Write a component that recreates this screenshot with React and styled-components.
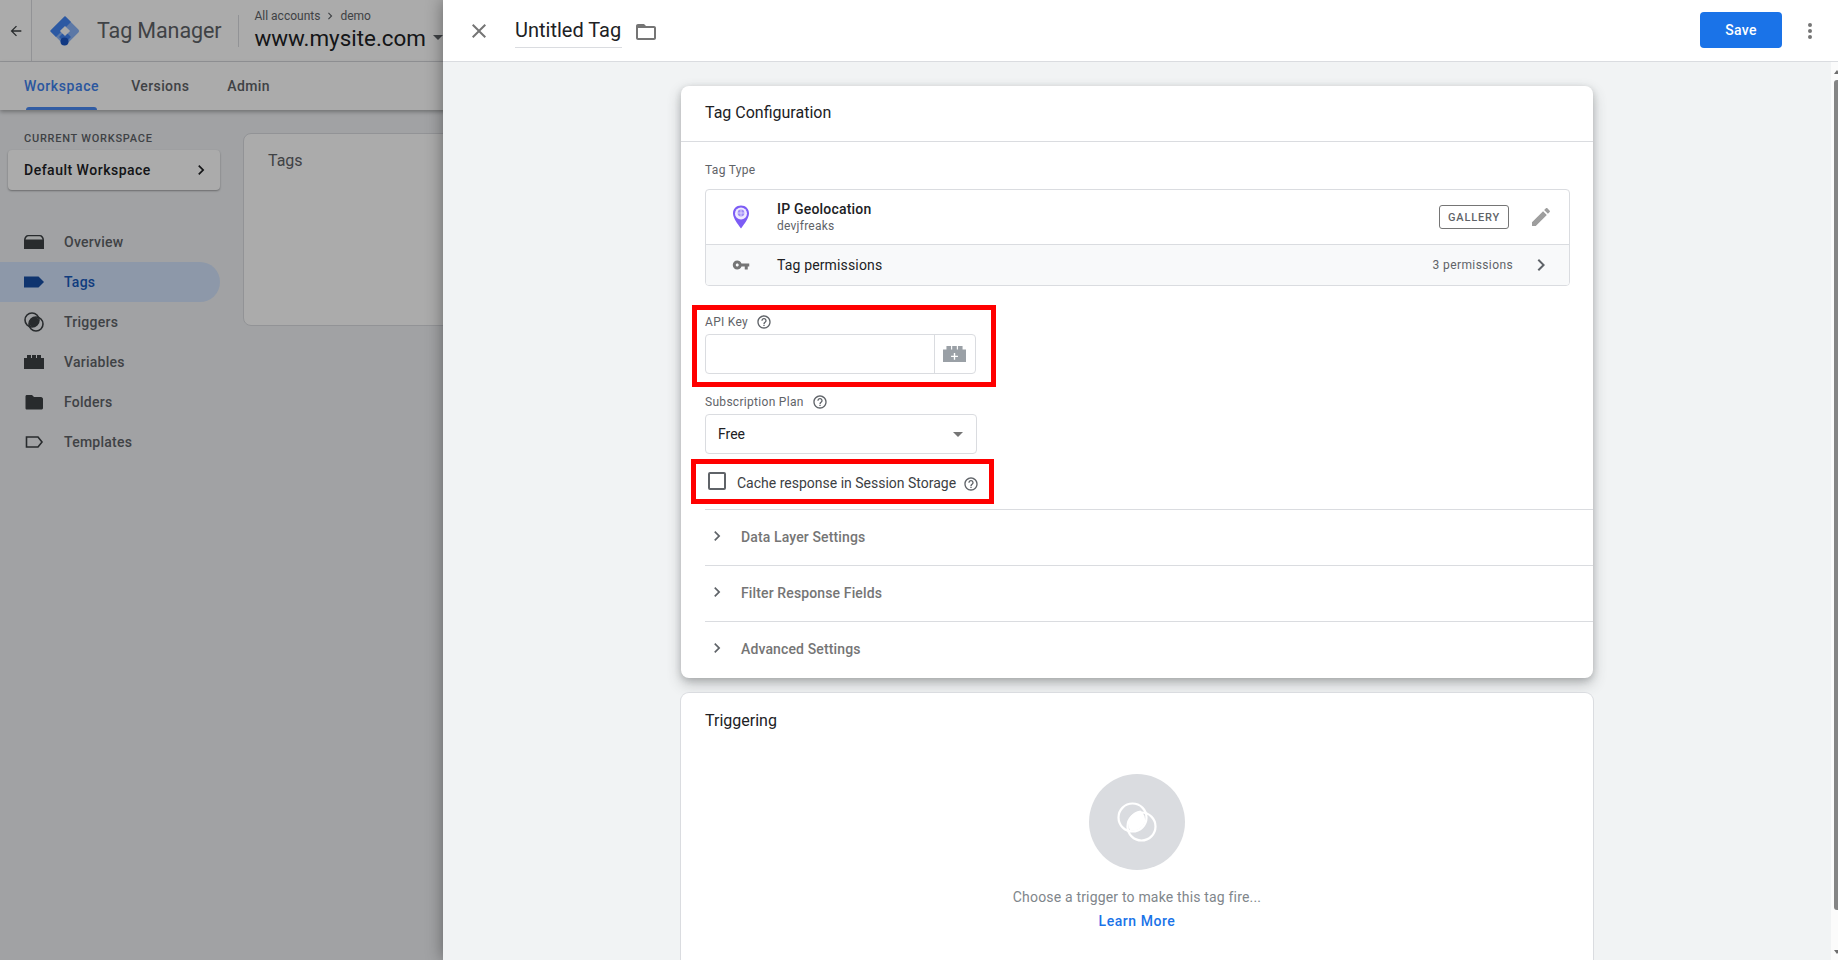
import React from "react";
import styled, { createGlobalStyle } from "styled-components";

const Global = createGlobalStyle`
  html, body { margin: 0; padding: 0; height: 100%; overflow: hidden; }
  body { font-family: Roboto, "Liberation Sans", sans-serif; color: #202124; }
  *, *::before, *::after { box-sizing: border-box; }
`;

const Page = styled.div`
  position: relative;
  width: 1838px;
  height: 960px;
  overflow: hidden;
  background: #f0f2f5;
`;

/* ---------- background app ---------- */
const Header = styled.header`
  display: flex;
  align-items: center;
  height: 62px;
  background: #fff;
  border-bottom: 1px solid #dadce0;
`;
const BackCell = styled.div`
  width: 32px;
  height: 61px;
  display: flex;
  align-items: center;
  justify-content: center;
  border-right: 1px solid #dadce0;
  color: #3c4043;
`;
const Brand = styled.div`
  display: flex;
  align-items: center;
  gap: 16px;
  padding: 0 17px;
  height: 32px;
  border-right: 1px solid #dadce0;
  margin-right: 15px;
`;
const BrandName = styled.span`
  font-size: 21.5px;
  color: #5f6368;
  letter-spacing: -0.1px;
  white-space: nowrap;
`;
const Account = styled.div`
  display: flex;
  flex-direction: column;
  margin-top: -1px;
`;
const Crumb = styled.div`
  display: flex;
  align-items: center;
  gap: 3px;
  font-size: 12px;
  line-height: 15px;
  color: #5f6368;
`;
const Container = styled.div`
  display: flex;
  align-items: center;
  gap: 7px;
  font-size: 22.4px;
  line-height: 28px;
  color: #202124;
  white-space: nowrap;
`;
const Caret = styled.span`
  width: 0;
  height: 0;
  border-left: 5px solid transparent;
  border-right: 5px solid transparent;
  border-top: 5px solid #5f6368;
`;
const TabBar = styled.nav`
  position: relative;
  display: flex;
  height: 48px;
  padding-left: 24px;
  background: #fff;
  box-shadow: 0 2px 4px rgba(0, 0, 0, 0.3);
`;
const Tab = styled.div`
  position: relative;
  display: flex;
  align-items: center;
  height: 48px;
  margin-right: ${(p) => p.$gap}px;
  font-size: 14px;
  font-weight: 500;
  letter-spacing: ${(p) => (p.$active ? 0.6 : 0.4)}px;
  color: ${(p) => (p.$active ? "#3f82ee" : "#5f6368")};
  ${(p) =>
    p.$active &&
    `&::after {
      content: "";
      position: absolute;
      left: 2px;
      right: 2px;
      bottom: 0;
      height: 3px;
      border-radius: 3px 3px 0 0;
      background: #4a8af4;
    }`}
`;
const Body = styled.div`
  display: flex;
  height: 850px;
`;
const Sidebar = styled.aside`
  width: 220px;
  margin-right: 23px;
  flex-shrink: 0;
  padding-top: 21px;
`;
const SideLabel = styled.div`
  padding-left: 24px;
  font-size: 11px;
  line-height: 16px;
  height: 19px;
  font-weight: 500;
  letter-spacing: 0.75px;
  color: #5f6368;
`;
const WorkspaceCard = styled.div`
  display: flex;
  align-items: center;
  justify-content: space-between;
  margin-left: 8px;
  height: 40px;
  padding: 0 9px 0 16px;
  background: #fff;
  border-radius: 4px;
  box-shadow: 0 1px 2px rgba(0, 0, 0, 0.35);
  font-size: 14px;
  font-weight: 500;
  letter-spacing: 0.5px;
  margin-bottom: 32px;
`;
const NavItem = styled.div`
  display: flex;
  align-items: center;
  gap: 20px;
  height: 40px;
  padding-left: 24px;
  border-radius: 0 20px 20px 0;
  font-size: 14px;
  font-weight: 500;
  letter-spacing: 0.25px;
  background: ${(p) => (p.$active ? "#d2e3fc" : "transparent")};
  color: ${(p) => (p.$active ? "#185abc" : "#5f6368")};
`;
const TagsCard = styled.section`
  flex: 1;
  height: 193px;
  margin-top: 23px;
  padding: 15px 24px;
  background: #fff;
  border: 1px solid #dadce0;
  border-radius: 8px;
  font-size: 16px;
  line-height: 24px;
  color: #5f6368;
`;

/* ---------- scrim + drawer ---------- */
const Scrim = styled.div`
  position: absolute;
  inset: 0;
  background: rgba(0, 0, 0, 0.33);
`;
const Drawer = styled.div`
  position: absolute;
  top: 0;
  right: 0;
  bottom: 0;
  width: 1395px;
  display: flex;
  flex-direction: column;
  background: #f1f3f4;
  box-shadow: 0 0 16px rgba(0, 0, 0, 0.4);
`;
const DrawerBar = styled.div`
  flex: none;
  display: flex;
  align-items: center;
  height: 62px;
  padding: 0 16px 0 24px;
  background: #fff;
  border-bottom: 1px solid #dadce0;
`;
const CloseBtn = styled.div`
  width: 24px;
  height: 24px;
  margin-right: 24px;
  color: #757575;
`;
const Title = styled.div`
  font-size: 20px;
  line-height: 30px;
  height: 34px;
  padding-top: 1px;
  width: 107px;
  border-bottom: 1px solid #dadce0;
  white-space: nowrap;
  color: #202124;
`;
const FolderBtn = styled.div`
  width: 24px;
  height: 24px;
  margin-left: 12px;
  margin-top: 2px;
  color: #757575;
`;
const Spacer = styled.div`
  flex: 1;
`;
const SaveBtn = styled.button`
  width: 82px;
  height: 36px;
  margin-right: 16px;
  margin-top: -1px;
  border: 0;
  border-radius: 4px;
  background: #1a73e8;
  color: #fff;
  font-family: inherit;
  font-size: 14px;
  font-weight: 500;
  letter-spacing: 0.25px;
`;
const Kebab = styled.div`
  width: 24px;
  height: 24px;
  color: #757575;
`;
const DrawerBody = styled.div`
  flex: 1;
  overflow: hidden;
  padding: 24px 0 0 238px;
`;
const Card = styled.section`
  width: 912px;
  background: #fff;
  border-radius: 8px;
  box-shadow: ${(p) =>
    p.$raised
      ? "0 2px 6px rgba(60,64,67,.2), 0 6px 14px rgba(60,64,67,.3)"
      : "0 0 0 1px #dadce0"};
  margin-bottom: 15px;
`;
const CardHead = styled.h2`
  margin: 0;
  height: ${(p) => (p.$flat ? 55 : 56)}px;
  padding: ${(p) => (p.$flat ? 16 : 15)}px 24px 0;
  font-size: 16px;
  line-height: 24px;
  font-weight: 400;
  color: #202124;
  border-bottom: ${(p) => (p.$flat ? "none" : "1px solid #dadce0")};
`;
const CardBody = styled.div`
  padding: 20px 0 0 24px;
`;
const FieldLabel = styled.div`
  display: flex;
  align-items: center;
  gap: 8px;
  font-size: 12px;
  line-height: 16px;
  color: #5f6368;
  letter-spacing: 0.3px;
`;
const HelpIcon = styled.span`
  display: inline-flex;
  color: #5f6368;
`;
const TypeBox = styled.div`
  width: 865px;
  margin-top: 11px;
  border: 1px solid #dadce0;
  border-radius: 4px;
  overflow: hidden;
`;
const TypeRow = styled.div`
  display: flex;
  align-items: center;
  height: 55px;
  padding-right: 16px;
  border-bottom: 1px solid #dadce0;
`;
const PermRow = styled.div`
  display: flex;
  align-items: center;
  height: 40px;
  padding-right: 16px;
  background: #f8f9fa;
`;
const RowIcon = styled.div`
  width: 71px;
  display: flex;
  justify-content: center;
  padding-right: 2px;
  flex: none;
`;
const TypeName = styled.div`
  font-size: 14px;
  line-height: 16px;
  font-weight: 500;
  letter-spacing: 0.2px;
  color: #202124;
`;
const TypeSub = styled.div`
  font-size: 12px;
  line-height: 16px;
  margin-top: 1px;
  letter-spacing: 0.25px;
  color: #5f6368;
`;
const GalleryChip = styled.span`
  display: inline-flex;
  align-items: center;
  justify-content: center;
  width: 70px;
  height: 24px;
  margin-right: 20px;
  border: 1px solid #757575;
  border-radius: 3px;
  font-size: 11px;
  font-weight: 500;
  letter-spacing: 0.8px;
  color: #5f6368;
`;
const PermName = styled.div`
  font-size: 14px;
  color: #202124;
  letter-spacing: 0.15px;
`;
const PermCount = styled.div`
  font-size: 12px;
  color: #5f6368;
  letter-spacing: 0.4px;
  margin-right: 16px;
`;
const Highlight = styled.div`
  position: relative;
  width: ${(p) => p.$w}px;
  margin-top: ${(p) => p.$mt}px;
  &::before {
    content: "";
    position: absolute;
    left: ${(p) => p.$l}px;
    top: ${(p) => p.$t}px;
    width: ${(p) => p.$bw}px;
    height: ${(p) => p.$bh}px;
    border: 5px solid #ff0000;
    pointer-events: none;
  }
`;
const InputGroup = styled.div`
  display: flex;
  width: 271px;
  height: 40px;
  margin-top: 4px;
  border: 1px solid #dadce0;
  border-radius: 4px;
`;
const InputSlot = styled.div`
  flex: 1;
  border-right: 1px solid #dadce0;
`;
const VarBtn = styled.div`
  width: 40px;
  display: flex;
  align-items: center;
  justify-content: center;
  padding-right: 2px;
`;
const Field = styled.div`
  margin-top: ${(p) => p.$mt}px;
`;
const Select = styled.div`
  display: flex;
  align-items: center;
  justify-content: space-between;
  width: 272px;
  height: 40px;
  margin-top: 4px;
  padding: 0 13px 0 12px;
  border: 1px solid #dadce0;
  border-radius: 4px;
  font-size: 14px;
  color: #202124;
`;
const SelectCaret = styled.span`
  width: 0;
  height: 0;
  border-left: 5px solid transparent;
  border-right: 5px solid transparent;
  border-top: 5px solid #757575;
`;
const CheckRow = styled.div`
  display: flex;
  align-items: center;
  height: 24px;
  padding-left: 3px;
  font-size: 14px;
  color: #3c4043;
  white-space: nowrap;
`;
const CheckBox = styled.span`
  width: 18px;
  height: 18px;
  margin-right: 11px;
  margin-top: -5px;
  border: 2px solid #5f6368;
  border-radius: 2px;
`;
const CheckHelp = styled.span`
  display: inline-flex;
  margin-left: 7px;
  margin-top: 2px;
  color: #5f6368;
`;
const Sections = styled.div`
  margin-top: 14px;
  padding-bottom: 1px;
`;
const Section = styled.div`
  display: flex;
  align-items: center;
  height: 56px;
  padding: 0 0 2px 2px;
  border-top: 1px solid #dadce0;
  margin-left: 24px;
  font-size: 14px;
  font-weight: 500;
  letter-spacing: 0.13px;
  color: #757575;
`;
const SectionChevron = styled.span`
  display: inline-flex;
  width: 34px;
  margin-top: -2px;
  color: #5f6368;
`;
const Empty = styled.div`
  display: flex;
  flex-direction: column;
  align-items: center;
  padding: 26px 0 60px;
`;
const EmptyCircle = styled.div`
  width: 96px;
  height: 96px;
  border-radius: 50%;
  background: #dadce0;
  display: flex;
  align-items: center;
  justify-content: center;
`;
const EmptyText = styled.div`
  margin-top: 17px;
  font-size: 14px;
  line-height: 20px;
  letter-spacing: 0.18px;
  color: #80868b;
`;
const LearnMore = styled.div`
  margin-top: 4px;
  font-size: 14px;
  line-height: 20px;
  font-weight: 500;
  letter-spacing: 0.55px;
  color: #1a73e8;
`;
const Scrollbar = styled.div`
  position: absolute;
  top: 62px;
  right: 0;
  bottom: 0;
  width: 7px;
  display: flex;
  flex-direction: column;
  align-items: flex-end;
  background: #fbfbfb;
  overflow: hidden;
`;
const ScrollThumb = styled.div`
  width: 4px;
  height: 830px;
  margin-top: 6px;
  border-radius: 3px 0 0 3px;
  background: #858585;
`;
const ScrollArrow = styled.span`
  width: 0;
  height: 0;
  margin-right: -2px;
  border-left: 3px solid transparent;
  border-right: 3px solid transparent;
  ${(p) =>
    p.$up
      ? "border-bottom: 4px solid #6e6e6e; margin-top: 8px;"
      : "border-top: 4px solid #6e6e6e; margin-bottom: 6px;"}
`;

/* ---------- icons ---------- */
const Icon = ({ d, size = 24, color = "currentColor" }) => (
  <svg width={size} height={size} viewBox="0 0 24 24" fill={color} style={{ display: "block", flex: "none" }}>
    <path d={d} />
  </svg>
);
const P = {
  back: "M20 11H7.83l5.59-5.59L12 4l-8 8 8 8 1.41-1.41L7.83 13H20v-2z",
  close: "M19 6.41L17.59 5 12 10.59 6.41 5 5 6.41 10.59 12 5 17.59 6.41 19 12 13.41 17.59 19 19 17.59 13.41 12z",
  folder: "M20 6h-8l-2-2H4c-1.1 0-1.99.9-1.99 2L2 18c0 1.1.9 2 2 2h16c1.1 0 2-.9 2-2V8c0-1.1-.9-2-2-2zm0 12H4V8h16v10z",
  more: "M12 8a2 2 0 1 0 0-4 2 2 0 0 0 0 4zm0 2a2 2 0 1 0 0 4 2 2 0 0 0 0-4zm0 6a2 2 0 1 0 0 4 2 2 0 0 0 0-4z",
  pencil: "M3 17.25V21h3.75L17.81 9.94l-3.75-3.75L3 17.25zM20.71 7.04c.39-.39.39-1.02 0-1.41l-2.34-2.34c-.39-.39-1.02-.39-1.41 0l-1.83 1.83 3.75 3.75 1.83-1.83z",
  key: "M12.65 10C11.83 7.67 9.61 6 7 6c-3.31 0-6 2.69-6 6s2.69 6 6 6c2.61 0 4.83-1.67 5.65-4H17v4h4v-4h2v-4H12.65zM7 14c-1.1 0-2-.9-2-2s.9-2 2-2 2 .9 2 2-.9 2-2 2z",
  chevron: "M10 6L8.59 7.41 13.17 12l-4.58 4.59L10 18l6-6z",
  help: "M11 18h2v-2h-2v2zm1-16C6.48 2 2 6.48 2 12s4.48 10 10 10 10-4.48 10-10S17.52 2 12 2zm0 18c-4.41 0-8-3.59-8-8s3.59-8 8-8 8 3.59 8 8-3.59 8-8 8zm0-14c-2.21 0-4 1.79-4 4h2c0-1.1.9-2 2-2s2 .9 2 2c0 2-3 1.75-3 5h2c0-2.25 3-2.5 3-5 0-2.21-1.79-4-4-4z",
};

const Logo = () => (
  <svg width="32" height="32" viewBox="0 0 32 32" style={{ flex: "none" }}>
    <rect x="5.5" y="5.5" width="21" height="21" rx="2" transform="rotate(45 16 16)" fill="#8ab4f8" />
    <path d="M16 1 L22 7 L7 22 L1 16 Z" fill="#4285f4" />
    <path d="M16 16 L22 22 L16 28 L10 22 Z" fill="#4285f4" />
    <rect x="12.4" y="12.4" width="7.2" height="7.2" transform="rotate(45 16 16)" fill="#fff" />
    <circle cx="15.5" cy="26.5" r="4" fill="#1a56c4" />
  </svg>
);
const OverviewIcon = () => (
  <svg width="20" height="16" viewBox="0 0 20 16" style={{ flex: "none" }}>
    <path d="M0 6 C0 3 2 1 4 1 H16 C18 1 20 3 20 6 V15 H0 Z" fill="#3c4043" />
    <path d="M1.5 5.5 C2 3.5 3 2.2 4.5 2.2 H15.5 C17 2.2 18 3.5 18.5 5.5 Z" fill="#f1f3f4" />
  </svg>
);
const TagIcon = () => (
  <svg width="20" height="14" viewBox="0 0 20 14" style={{ flex: "none" }}>
    <path d="M0 1.5 H14.5 L20 7 L14.5 12.5 H0 Z" fill="#174ea6" />
  </svg>
);
const TriggerIcon = ({ size = 20, color = "#3c4043" }) => (
  <svg width={size} height={size} viewBox="0 0 20 20" style={{ flex: "none" }}>
    <circle cx="8" cy="8" r="7" fill="none" stroke={color} strokeWidth="1.6" />
    <circle cx="12" cy="12" r="7" fill="none" stroke={color} strokeWidth="1.6" />
    <path d="M12 5 A7 7 0 0 1 15 8 A7 7 0 0 1 8 15 A7 7 0 0 1 5 12 A7 7 0 0 1 12 5Z" fill={color} />
  </svg>
);
const BrickIcon = ({ width = 20, color = "#3c4043", plus }) => (
  <svg width={width} height={(width * 14) / 20} viewBox="0 0 20 14" style={{ flex: "none" }}>
    <path d="M0 3 H3 V0 H7 V3 H8 V0 H12 V3 H13 V0 H17 V3 H20 V14 H0 Z" fill={color} />
    {plus && <path d="M9.4 6 H10.6 V8.4 H13 V9.6 H10.6 V12 H9.4 V9.6 H7 V8.4 H9.4 Z" fill="#fff" />}
  </svg>
);
const FolderIcon = () => (
  <svg width="20" height="16" viewBox="0 0 20 16" style={{ flex: "none" }}>
    <path d="M3 1 H8 L10 3 H17 C18 3 19 4 19 5 V14 C19 15 18 15.5 17 15.5 H3 C2 15.5 1.5 15 1.5 14 V2.5 C1.5 1.5 2 1 3 1Z" fill="#3c4043" />
  </svg>
);
const TemplateIcon = () => (
  <svg width="20" height="14" viewBox="0 0 20 14" style={{ flex: "none" }}>
    <path d="M2.5 2 H14 L18 7 L14 12 H2.5 Z" fill="none" stroke="#3c4043" strokeWidth="1.6" />
  </svg>
);
const GeoIcon = () => (
  <svg width="18" height="24" viewBox="0 0 18 24">
    <path d="M9 0.5 C4.2 0.5 1 4 1 8.4 C1 13 5.6 18.6 9 23.5 C12.4 18.6 17 13 17 8.4 C17 4 13.8 0.5 9 0.5Z" fill="#7c5cf5" />
    <circle cx="9" cy="8.4" r="6" fill="#efeaff" />
    <circle cx="9" cy="8" r="3.4" fill="#a08df7" />
    <path d="M5.6 8 H12.4 M9 4.6 V11.4" stroke="#efeaff" strokeWidth="0.7" />
  </svg>
);
const EmptyTrigger = () => (
  <svg width="44" height="44" viewBox="0 0 44 44">
    <path d="M26.5 9.6 A13.4 13.4 0 0 1 31 21 A13.4 13.4 0 0 1 16 29.5 A13.4 13.4 0 0 1 26.5 9.6 Z" fill="#fff" transform="translate(-1 1)" />
    <circle cx="17.5" cy="17.5" r="14" fill="none" stroke="#fff" strokeWidth="2.2" />
    <circle cx="26.5" cy="26.5" r="14" fill="none" stroke="#fff" strokeWidth="2.2" />
  </svg>
);

const navItems = [
  { label: "Overview", icon: <OverviewIcon /> },
  { label: "Tags", icon: <TagIcon />, active: true },
  { label: "Triggers", icon: <TriggerIcon /> },
  { label: "Variables", icon: <BrickIcon /> },
  { label: "Folders", icon: <FolderIcon /> },
  { label: "Templates", icon: <TemplateIcon /> },
];
const sections = ["Data Layer Settings", "Filter Response Fields", "Advanced Settings"];

const Help = ({ size = 16 }) => (
  <HelpIcon>
    <Icon d={P.help} size={size} />
  </HelpIcon>
);

export default function App() {
  return (
    <Page>
      <Global />
      <Header>
        <BackCell>
          <Icon d={P.back} size={16} />
        </BackCell>
        <Brand>
          <Logo />
          <BrandName>Tag Manager</BrandName>
        </Brand>
        <Account>
          <Crumb>
            All accounts <Icon d={P.chevron} size={14} color="#5f6368" /> demo
          </Crumb>
          <Container>
            www.mysite.com <Caret />
          </Container>
        </Account>
      </Header>
      <TabBar>
        <Tab $active $gap={32}>Workspace</Tab>
        <Tab $gap={38}>Versions</Tab>
        <Tab $gap={0}>Admin</Tab>
      </TabBar>
      <Body>
        <Sidebar>
          <SideLabel>CURRENT WORKSPACE</SideLabel>
          <WorkspaceCard>
            Default Workspace
            <Icon d={P.chevron} size={20} />
          </WorkspaceCard>
          {navItems.map((n) => (
            <NavItem key={n.label} $active={n.active}>
              {n.icon}
              {n.label}
            </NavItem>
          ))}
        </Sidebar>
        <TagsCard>Tags</TagsCard>
      </Body>
      <Scrim />
      <Drawer>
        <DrawerBar>
          <CloseBtn>
            <Icon d={P.close} />
          </CloseBtn>
          <Title>Untitled Tag</Title>
          <FolderBtn>
            <Icon d={P.folder} />
          </FolderBtn>
          <Spacer />
          <SaveBtn>Save</SaveBtn>
          <Kebab>
            <Icon d={P.more} size={24} />
          </Kebab>
        </DrawerBar>
        <DrawerBody>
          <Card $raised>
            <CardHead>Tag Configuration</CardHead>
            <CardBody>
              <FieldLabel>Tag Type</FieldLabel>
              <TypeBox>
                <TypeRow>
                  <RowIcon>
                    <GeoIcon />
                  </RowIcon>
                  <div>
                    <TypeName>IP Geolocation</TypeName>
                    <TypeSub>devjfreaks</TypeSub>
                  </div>
                  <Spacer />
                  <GalleryChip>GALLERY</GalleryChip>
                  <Icon d={P.pencil} size={24} color="#9e9e9e" />
                </TypeRow>
                <PermRow>
                  <RowIcon>
                    <Icon d={P.key} size={18} color="#757575" />
                  </RowIcon>
                  <PermName>Tag permissions</PermName>
                  <Spacer />
                  <PermCount>3 permissions</PermCount>
                  <Icon d={P.chevron} size={24} color="#5f6368" />
                </PermRow>
              </TypeBox>
              <Highlight $w={300} $mt={28} $l={-13} $t={-9} $bw={304} $bh={82}>
                <FieldLabel>
                  API Key <Help />
                </FieldLabel>
                <InputGroup>
                  <InputSlot />
                  <VarBtn>
                    <BrickIcon width={23} color="#9aa0a6" plus />
                  </VarBtn>
                </InputGroup>
              </Highlight>
              <Field $mt={20}>
                <FieldLabel>
                  Subscription Plan <Help />
                </FieldLabel>
                <Select>
                  Free
                  <SelectCaret />
                </Select>
              </Field>
              <Highlight $w={300} $mt={17} $l={-14} $t={-12} $bw={303} $bh={45}>
                <CheckRow>
                  <CheckBox />
                  Cache response in Session Storage
                  <CheckHelp>
                    <Icon d={P.help} size={16} />
                  </CheckHelp>
                </CheckRow>
              </Highlight>
            </CardBody>
            <Sections>
              {sections.map((s) => (
                <Section key={s}>
                  <SectionChevron>
                    <Icon d={P.chevron} size={20} />
                  </SectionChevron>
                  {s}
                </Section>
              ))}
            </Sections>
          </Card>
          <Card>
            <CardHead $flat>Triggering</CardHead>
            <Empty>
              <EmptyCircle>
                <EmptyTrigger />
              </EmptyCircle>
              <EmptyText>Choose a trigger to make this tag fire...</EmptyText>
              <LearnMore>Learn More</LearnMore>
            </Empty>
          </Card>
        </DrawerBody>
        <Scrollbar>
          <ScrollArrow $up />
          <ScrollThumb />
          <Spacer />
          <ScrollArrow />
        </Scrollbar>
      </Drawer>
    </Page>
  );
}
